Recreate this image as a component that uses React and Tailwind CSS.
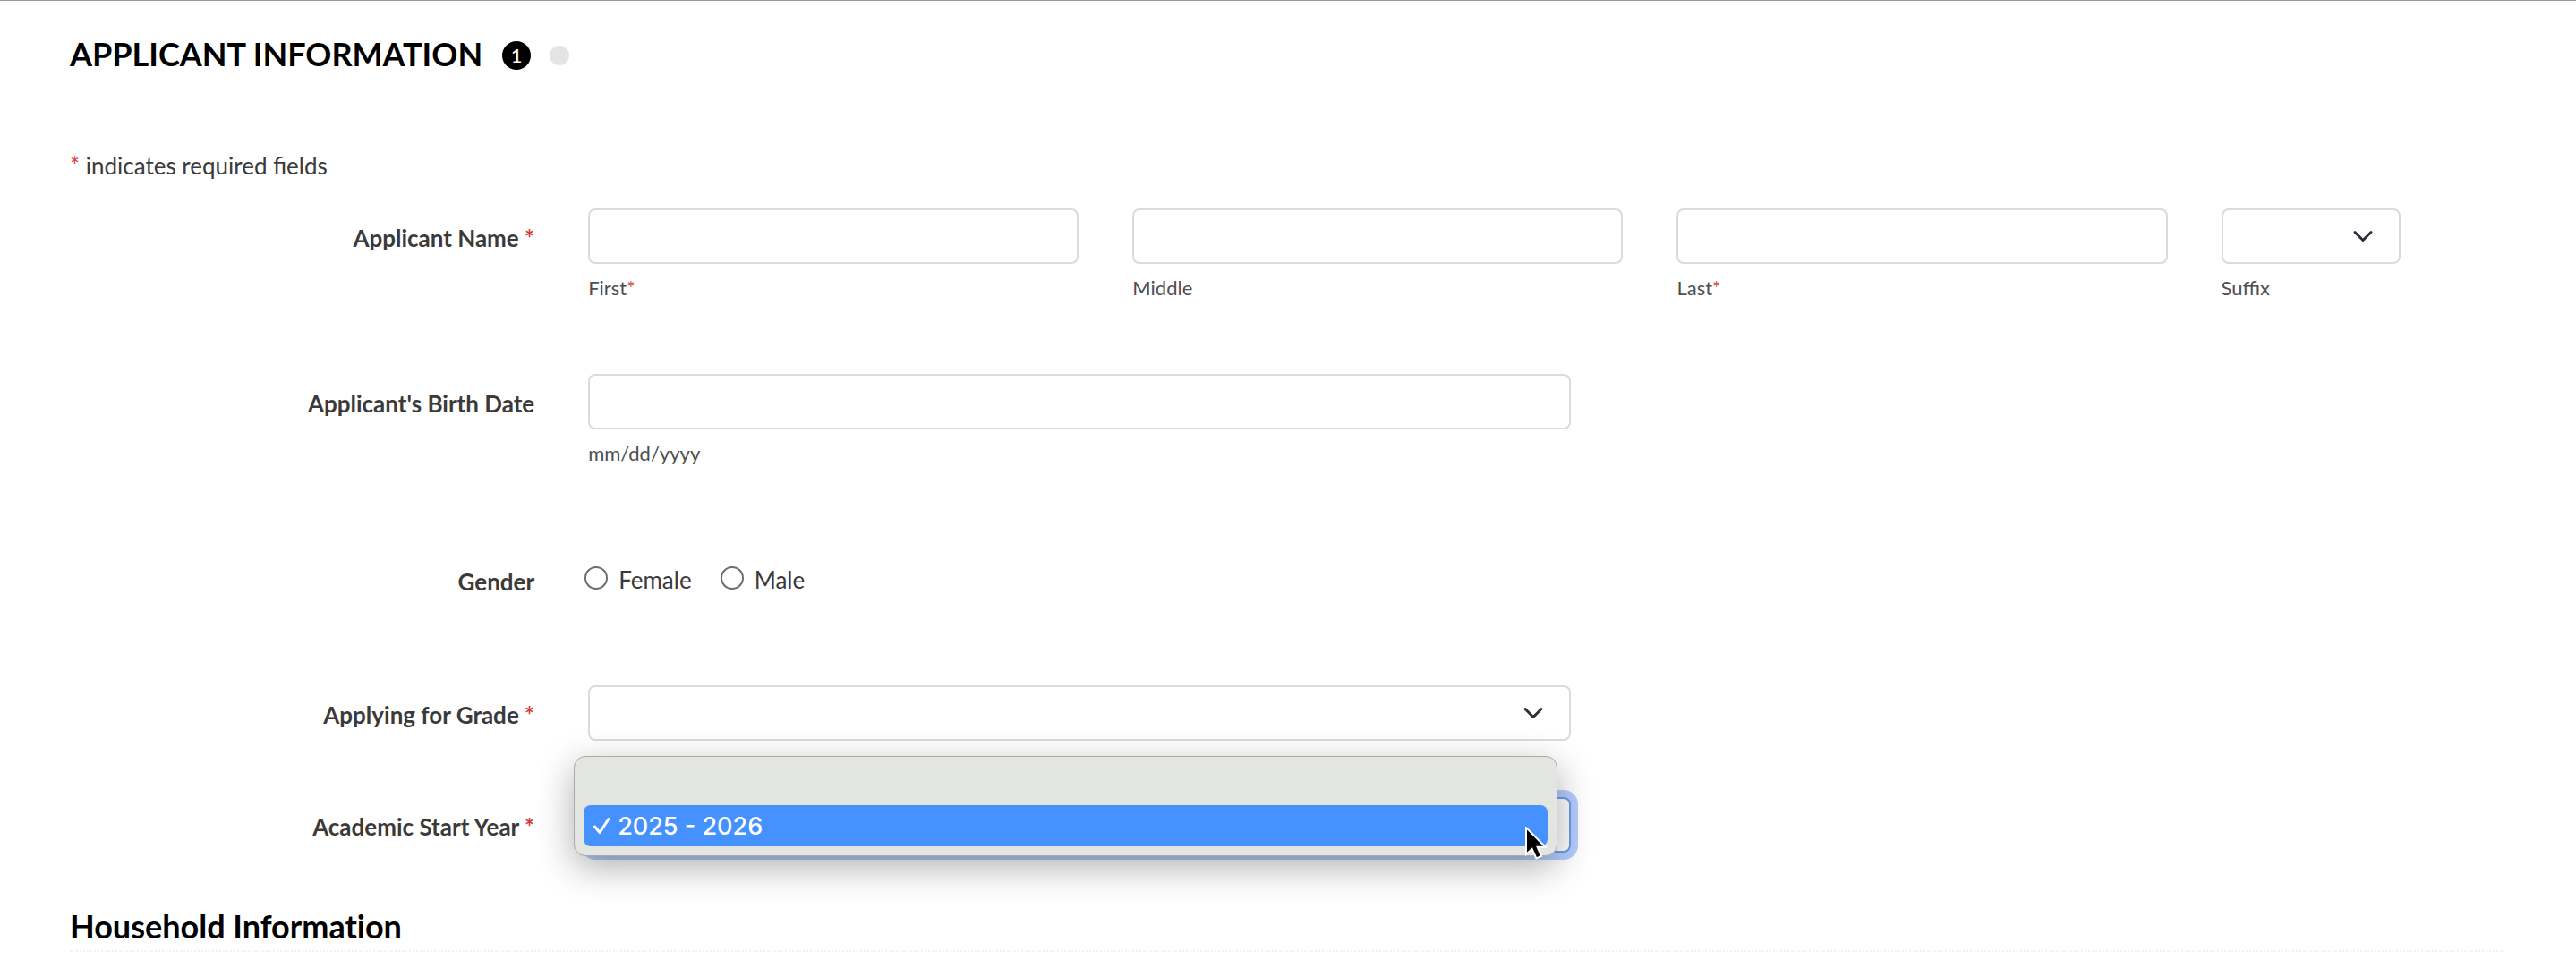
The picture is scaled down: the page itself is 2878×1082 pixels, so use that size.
import { useState } from "react";

const FIELD =
  "block h-[62px] w-full rounded-lg border-2 bg-white px-5 text-[26px] text-[#3b3a3a] outline-none";
const IDLE = "border-[#d9dbe1]";
const FOCUSED = "border-[#6c9fe8] ring-8 ring-[#b5cdff]";

function Required() {
  return <span className="text-[#d0403f]">*</span>;
}

function Row({ label, htmlFor, required, className, children }) {
  return (
    <div className={`flex ${className}`}>
      <div className="w-5/24 px-[30px] pt-[14px] text-right font-bold">
        <label htmlFor={htmlFor}>
          {label}
          {required && (
            <>
              {" "}
              <Required />
            </>
          )}
        </label>
      </div>
      {children}
    </div>
  );
}

function Caption({ htmlFor, required, children }) {
  return (
    <label
      htmlFor={htmlFor}
      className="mt-[10px] block text-[22px] leading-[33px] text-[#4f4e4e]"
    >
      {children}
      {required && <Required />}
    </label>
  );
}

function Select({ focused, children, ...props }) {
  return (
    <div className="relative">
      <select
        className={`${FIELD} appearance-none ${focused ? FOCUSED : IDLE}`}
        {...props}
      >
        {children}
      </select>
      <svg
        className="pointer-events-none absolute top-1/2 right-[30px] h-4 w-6 -translate-y-1/2"
        viewBox="0 0 24 16"
        fill="none"
        stroke="#2d2f38"
        strokeWidth="3"
        strokeLinecap="round"
        strokeLinejoin="round"
      >
        <path d="M3 3.5L12 12.5L21 3.5" />
      </svg>
    </div>
  );
}

function YearMenu({ value, onSelect }) {
  const years = ["", "2025 - 2026"];

  return (
    <div
      role="listbox"
      aria-label="Academic Start Year"
      className="absolute -top-[46px] right-[45px] left-[14px] z-10 rounded-[13px] border border-[#a9aaa9] bg-[#e2e5e0] p-[10px] pt-[8px] font-[Inter,sans-serif] text-[27px] shadow-[0_12px_40px_rgba(0,0,0,0.32)]"
    >
      {years.map((year) => (
        <button
          key={year}
          type="button"
          role="option"
          aria-selected={year === value}
          onClick={() => onSelect(year)}
          className={`flex h-[46px] w-full items-center rounded-lg pl-[10px] font-medium ${
            year === value ? "bg-[#4592ff] text-white" : ""
          }`}
        >
          <svg
            className="mr-[8px] h-5 w-5"
            viewBox="0 0 20 20"
            fill="none"
            stroke={year === value ? "white" : "none"}
            strokeWidth="3"
            strokeLinecap="round"
            strokeLinejoin="round"
          >
            <path d="M2.5 11L8 17.5L18 2.5" />
          </svg>
          {year}
        </button>
      ))}
      <svg
        className="absolute right-[10px] -bottom-[6px] h-[38px] w-[26px]"
        viewBox="0 0 26 38"
      >
        <path
          d="M2 1V31L8.6 25L13.4 35.5L19 33L14.6 22.8H23.5Z"
          fill="black"
          stroke="white"
          strokeWidth="2"
        />
      </svg>
    </div>
  );
}

function App() {
  const [gender, setGender] = useState("");
  const [year, setYear] = useState("2025 - 2026");

  return (
    <main className="border-t border-[#999] bg-white pt-8 pr-20 pl-[78px] font-[Lato,sans-serif] text-[26px] leading-[39px] text-[#3b3a3a]">
      <header className="flex items-center">
        <h1 className="text-[36px] leading-[54px] font-bold text-black">
          APPLICANT INFORMATION
        </h1>
        <div className="flex items-center pt-1">
          <span className="ml-[22px] flex h-8 w-8 items-center justify-center rounded-full bg-black text-[22px] leading-8 text-white">
            1
          </span>
          <span className="ml-[21px] h-[22px] w-[22px] rounded-full bg-[#e4e4e4]" />
        </div>
      </header>

      <form>
        <p className="mt-[79px] mb-[28px]">
          <Required /> indicates required fields
        </p>

        <div className="-mx-[30px]">
          <Row
            label="Applicant Name"
            htmlFor="first"
            required
            className="mb-[80px]"
          >
            <div className="flex w-18/24">
              <div className="w-7/24 px-[30px]">
                <input
                  id="first"
                  type="text"
                  required
                  className={`${FIELD} ${IDLE}`}
                />
                <Caption htmlFor="first" required>
                  First
                </Caption>
              </div>
              <div className="w-7/24 px-[30px]">
                <input
                  id="middle"
                  type="text"
                  className={`${FIELD} ${IDLE}`}
                />
                <Caption htmlFor="middle">Middle</Caption>
              </div>
              <div className="w-7/24 px-[30px]">
                <input
                  id="last"
                  type="text"
                  required
                  className={`${FIELD} ${IDLE}`}
                />
                <Caption htmlFor="last" required>
                  Last
                </Caption>
              </div>
              <div className="w-3/24 px-[30px]">
                <Select id="suffix">
                  <option value=""></option>
                </Select>
                <Caption htmlFor="suffix">Suffix</Caption>
              </div>
            </div>
          </Row>

          <Row
            label="Applicant's Birth Date"
            htmlFor="birth"
            className="mb-[94px]"
          >
            <div className="w-10/24 px-[30px]">
              <input id="birth" type="text" className={`${FIELD} ${IDLE}`} />
              <Caption htmlFor="birth">mm/dd/yyyy</Caption>
            </div>
          </Row>

          <Row label="Gender" htmlFor="female" className="mb-[96px]">
            <div className="flex w-10/24 gap-8 px-[26px] pt-[12px]">
              {["Female", "Male"].map((option) => (
                <label key={option} className="flex items-start">
                  <input
                    id={option.toLowerCase()}
                    type="radio"
                    name="gender"
                    checked={gender === option}
                    onChange={() => setGender(option)}
                    className="mt-1 mr-3 h-[26px] w-[26px] appearance-none rounded-full border-2 border-[#6c6c6c] bg-white checked:border-8"
                  />
                  {option}
                </label>
              ))}
            </div>
          </Row>

          <Row
            label="Applying for Grade"
            htmlFor="grade"
            required
            className="mb-[63px]"
          >
            <div className="w-10/24 px-[30px]">
              <Select id="grade">
                <option value=""></option>
              </Select>
            </div>
          </Row>

          <Row
            label="Academic Start Year"
            htmlFor="year"
            required
            className="mb-[55px]"
          >
            <div className="relative w-10/24 px-[30px]">
              <Select
                id="year"
                focused
                value={year}
                onChange={(e) => setYear(e.target.value)}
              >
                <option value=""></option>
                <option>2025 - 2026</option>
              </Select>
              <YearMenu value={year} onSelect={setYear} />
            </div>
          </Row>
        </div>

        <h2 className="border-b-2 border-dotted border-[#f1f1f1] text-[36px] leading-[54px] font-bold text-black [font-variant-ligatures:none]">
          Household Information
        </h2>
      </form>
    </main>
  );
}

export default App;
